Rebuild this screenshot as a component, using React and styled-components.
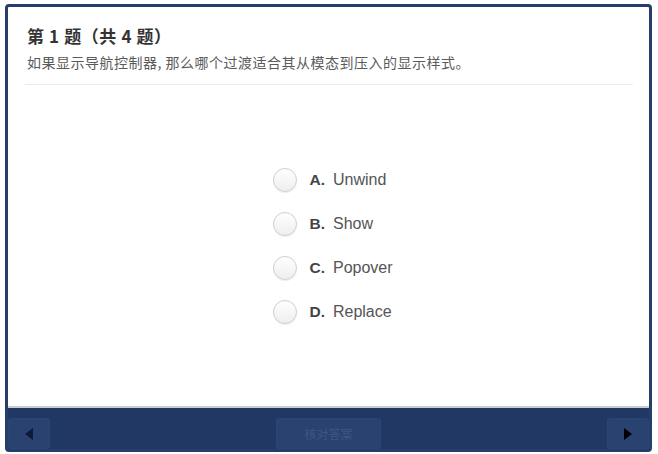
import React from "react";
import styled, { createGlobalStyle } from "styled-components";

const Global = createGlobalStyle`
  html, body { margin: 0; padding: 0; background: #ffffff; }
  body { font-family: "Liberation Sans", "Noto Sans CJK SC", sans-serif; }
`;

const Frame = styled.div`
  box-sizing: border-box;
  margin: 4px 0 0 5px;
  width: 647px;
  height: 448px;
  border: 3px solid #263e6b;
  border-radius: 4px;
  background: #213864;
  display: flex;
  flex-direction: column;
  overflow: hidden;
`;

const Main = styled.div`
  flex: 1;
  background: #ffffff;
  border-bottom: 2px solid #c9ccd2;
  display: flex;
  flex-direction: column;
  padding: 0 16px 0 17px;
`;

const Header = styled.div`
  padding: 17px 0 12px 2px;
  border-bottom: 1px solid #ebebeb;
`;

const Title = styled.div`
  font-family: "Noto Sans CJK SC", sans-serif;
  font-size: 17px;
  font-weight: 700;
  line-height: 24px;
  letter-spacing: 0.6px;
  color: #333333;
`;

const Subtitle = styled.div`
  margin-top: 4px;
  font-family: "Noto Sans CJK SC", sans-serif;
  font-size: 14px;
  line-height: 20px;
  color: #5a5a5a;
  letter-spacing: 0.5px;
`;

const Body = styled.div`
  flex: 1;
  display: flex;
  align-items: center;
  justify-content: center;
  padding-left: 8px;
`;

const Options = styled.div`
  display: flex;
  flex-direction: column;
  gap: 20px;
`;

const Option = styled.label`
  display: flex;
  align-items: center;
  gap: 12px;
  cursor: pointer;
`;

const Radio = styled.span`
  box-sizing: border-box;
  width: 24px;
  height: 24px;
  border-radius: 50%;
  border: 1px solid #cfcfcf;
  background: linear-gradient(#ffffff, #eeeeee);
  box-shadow: 0 1px 1px rgba(0, 0, 0, 0.08);
`;

const Letter = styled.span`
  font-size: 15.5px;
  font-weight: 700;
  color: #444444;
  margin-right: 8px;
`;

const Label = styled.span`
  font-family: "Liberation Sans", sans-serif;
  font-size: 16px;
  color: #555555;
  display: flex;
  align-items: baseline;
`;

const Footer = styled.div`
  height: 41px;
  padding-top: 10px;
  box-sizing: border-box;
  display: flex;
  align-items: stretch;
  justify-content: space-between;
`;

const NavButton = styled.button`
  width: ${(p) => p.$w}px;
  height: 31px;
  border: 1px solid #2c4673;
  border-radius: 3px;
  background: #294270;
  display: flex;
  align-items: center;
  justify-content: center;
  padding: 0;
  font-family: "Noto Sans CJK SC", sans-serif;
  font-size: 12px;
  color: #3e5684;
`;

const Arrow = ({ dir, color }) => (
  <svg width="10" height="12" viewBox="0 0 10 12">
    {dir === "left" ? (
      <path d="M9 0 L1 6 L9 12 Z" fill={color} />
    ) : (
      <path d="M1 0 L9 6 L1 12 Z" fill={color} />
    )}
  </svg>
);

const options = [
  ["A.", "Unwind"],
  ["B.", "Show"],
  ["C.", "Popover"],
  ["D.", "Replace"],
];

export default function App() {
  return (
    <>
      <Global />
      <Frame>
        <Main>
          <Header>
            <Title>第 1 题（共 4 题）</Title>
            <Subtitle>如果显示导航控制器, 那么哪个过渡适合其从模态到压入的显示样式。</Subtitle>
          </Header>
          <Body>
            <Options>
              {options.map(([l, t]) => (
                <Option key={l}>
                  <Radio />
                  <Label>
                    <Letter>{l}</Letter>
                    {t}
                  </Label>
                </Option>
              ))}
            </Options>
          </Body>
        </Main>
        <Footer>
          <NavButton $w={42}>
            <Arrow dir="left" color="#101a35" />
          </NavButton>
          <NavButton $w={105}>核对答案</NavButton>
          <NavButton $w={42}>
            <Arrow dir="right" color="#000000" />
          </NavButton>
        </Footer>
      </Frame>
    </>
  );
}
